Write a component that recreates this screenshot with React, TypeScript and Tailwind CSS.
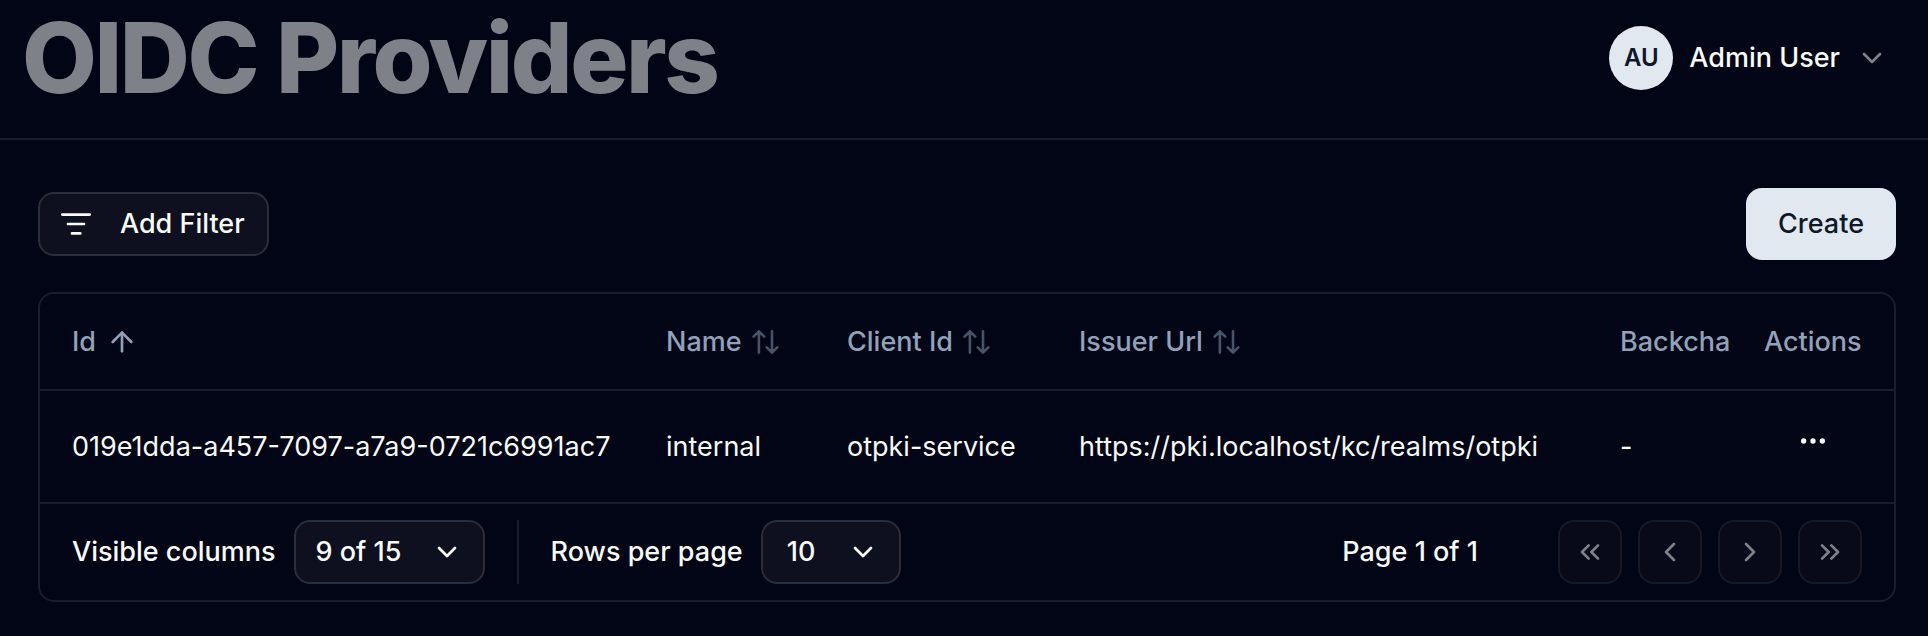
import { ArrowUp, ChevronDown, ChevronLeft, ChevronRight, ChevronsLeft, ChevronsRight, Ellipsis } from "lucide-react";

function SortIcon() {
  return (
    <svg width="28" height="24" viewBox="0 0 28 24" fill="none" stroke="currentColor" strokeWidth="2.6" strokeLinecap="round" strokeLinejoin="round" className="opacity-50" aria-hidden="true">
      <path d="M1.6 6.7 6.9 1.4l5.3 5.3M6.9 1.4v21.2M20 1.4v21.2M14.7 17.3l5.3 5.3 5.3-5.3" />
    </svg>
  );
}

function FilterIcon() {
  return (
    <svg width="32" height="32" viewBox="0 0 32 32" fill="none" stroke="currentColor" strokeWidth="2.7" strokeLinecap="round" aria-hidden="true">
      <path d="M2.3 6.6h27.4M8 16h16M12 25.4h8.3" />
    </svg>
  );
}

const pageButtons = [
  { label: "First page", Icon: ChevronsLeft },
  { label: "Previous page", Icon: ChevronLeft },
  { label: "Next page", Icon: ChevronRight },
  { label: "Last page", Icon: ChevronsRight },
];

function SortHeader({ children }: { children: string }) {
  return (
    <th className="px-8 text-left font-medium">
      <button className="flex items-center gap-2.5">
        {children}
        <SortIcon />
      </button>
    </th>
  );
}

function Picker({ id, label, value, size, inset }: { id: string; label: string; value: string; size: string; inset: string }) {
  return (
    <div className="flex items-center gap-[18px]">
      <label htmlFor={id}>{label}</label>
      <div className={`relative ${size}`}>
        <select id={id} className={`h-16 w-full appearance-none rounded-2xl border-2 border-[#2b2d3b] bg-[#0e101f] pr-14 outline-none ${inset}`}>
          <option>{value}</option>
        </select>
        <ChevronDown size={32} className="pointer-events-none absolute top-4 right-[22px]" />
      </div>
    </div>
  );
}

export default function App() {
  return (
    <div className="min-h-screen bg-[#020515] font-['Inter',sans-serif] text-[27px] leading-10 font-medium text-slate-50">
      <header className="flex items-center justify-between border-b-2 border-[#1b1d2c] pt-2.5 pr-10 pb-8 pl-[22px]">
        <h1 className="text-[97px] leading-24 font-extrabold tracking-tight text-[#7f8189]">OIDC Providers</h1>
        <button className="flex items-center gap-4">
          <span className="flex size-16 items-center justify-center rounded-full bg-slate-200 text-2xl font-semibold text-slate-900">AU</span>
          <span>Admin User</span>
          <ChevronDown size={32} className="text-[#7f8189]" />
        </button>
      </header>

      <main className="pt-12 pr-8 pb-8 pl-[38px]">
        <div className="flex items-center justify-between">
          <button className="flex h-16 items-center gap-7 rounded-2xl border-2 border-[#2b2d3b] bg-[#0e101f] pr-[22px] pl-5">
            <FilterIcon />
            Add Filter
          </button>
          <button className="h-18 rounded-2xl bg-slate-200 px-8 text-slate-900">Create</button>
        </div>

        <section className="mt-8 overflow-hidden rounded-2xl border-2 border-[#1b1d2c]">
          <table className="w-full table-fixed whitespace-nowrap">
            <colgroup>
              <col className="w-[594px]" />
              <col className="w-[181px]" />
              <col className="w-[232px]" />
              <col className="w-[541px]" />
              <col />
              <col className="w-[162px]" />
            </colgroup>
            <thead>
              <tr className="h-24 border-b-2 border-[#1b1d2c] text-slate-400">
                <th className="px-8 text-left font-medium">
                  <button className="flex items-center gap-2.5">
                    Id
                    <ArrowUp size={32} />
                  </button>
                </th>
                <SortHeader>Name</SortHeader>
                <SortHeader>Client Id</SortHeader>
                <SortHeader>Issuer Url</SortHeader>
                <th className="overflow-hidden pl-8 text-left font-medium">Backcha</th>
                <th className="px-8 text-left font-medium">Actions</th>
              </tr>
            </thead>
            <tbody>
              <tr className="h-[113px] border-b-2 border-[#1b1d2c] font-normal">
                <td className="px-8">019e1dda-a457-7097-a7a9-0721c6991ac7</td>
                <td className="px-8">internal</td>
                <td className="px-8">otpki-service</td>
                <td className="px-8">https://pki.localhost/kc/realms/otpki</td>
                <td className="pl-8">-</td>
                <td className="px-8 pb-3">
                  <button aria-label="Row actions" className="mx-auto block">
                    <Ellipsis size={32} />
                  </button>
                </td>
              </tr>
            </tbody>
          </table>

          <footer className="flex items-center gap-8 px-8 py-4">
            <Picker id="columns" label="Visible columns" value="9 of 15" size="w-[191px]" inset="pl-5" />
            <div className="h-16 w-0.5 bg-[#1b1d2c]" />
            <Picker id="rows" label="Rows per page" value="10" size="w-[140px]" inset="pl-6" />
            <div className="ml-auto flex items-center gap-20">
              <span>Page 1 of 1</span>
              <nav aria-label="Pagination" className="flex gap-4">
                {pageButtons.map(({ label, Icon }) => (
                  <button key={label} aria-label={label} disabled className="flex size-16 items-center justify-center rounded-2xl border-2 border-[#171927] bg-[#080a19] text-[#7f8189]">
                    <Icon size={32} />
                  </button>
                ))}
              </nav>
            </div>
          </footer>
        </section>
      </main>
    </div>
  );
}
